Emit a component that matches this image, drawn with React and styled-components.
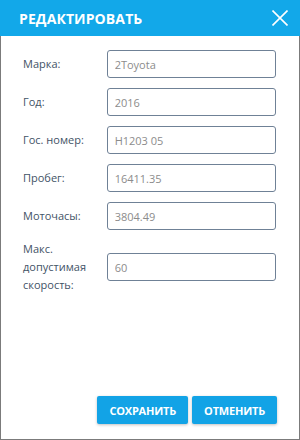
import React from "react";
import styled, { createGlobalStyle } from "styled-components";

const GlobalStyle = createGlobalStyle`
  html, body {
    margin: 0;
    padding: 0;
    background: #ffffff;
  }
  body {
    font-family: "Open Sans", "Liberation Sans", sans-serif;
  }
`;

const Dialog = styled.div`
  width: 300px;
  height: 440px;
  box-sizing: border-box;
  border: 1px solid #7b7b7b;
  border-top: none;
  display: flex;
  flex-direction: column;
  background: #fff;
`;

const Header = styled.div`
  height: 36px;
  margin: 0 -1px;
  background: #12a8e9;
  display: flex;
  align-items: center;
  justify-content: space-between;
  padding: 0 12px 0 19px;
  flex-shrink: 0;
`;

const Title = styled.h1`
  margin: 0;
  color: #fff;
  font-size: 14px;
  font-weight: 700;
  letter-spacing: 0.1px;
`;

const CloseButton = styled.button`
  border: none;
  background: none;
  padding: 0;
  width: 16px;
  height: 16px;
  display: flex;
  cursor: pointer;
`;

const Form = styled.div`
  flex: 1;
  display: flex;
  flex-direction: column;
  gap: 10px;
  padding: 14px 23px 0 22px;
`;

const Row = styled.div`
  display: flex;
  align-items: center;
  min-height: 28px;
`;

const Label = styled.label`
  width: 84px;
  font-size: 11px;
  line-height: 18px;
  color: #3f5366;
`;

const Input = styled.input`
  width: 170px;
  height: 28px;
  box-sizing: border-box;
  border: 1px solid #6f8196;
  border-radius: 3px;
  padding: 0 7px;
  font-family: inherit;
  font-size: 11px;
  color: #8c8c8c;
  outline: none;
`;

const Footer = styled.div`
  display: flex;
  justify-content: flex-end;
  gap: 4px;
  padding: 0 22px 15px 0;
`;

const Button = styled.button`
  height: 28px;
  padding: 0 12px;
  border: none;
  border-radius: 2px;
  background: #12a3e6;
  color: #fff;
  font-family: inherit;
  font-size: 11px;
  font-weight: 700;
  letter-spacing: -0.2px;
  box-shadow: 0 1px 3px rgba(0, 0, 0, 0.25);
  cursor: pointer;
`;

const fields = [
  { label: "Марка:", value: "2Toyota" },
  { label: "Год:", value: "2016" },
  { label: "Гос. номер:", value: "H1203 05" },
  { label: "Пробег:", value: "16411.35" },
  { label: "Моточасы:", value: "3804.49" },
  { label: "Макс. допустимая скорость:", value: "60" },
];

export default function App() {
  return (
    <>
      <GlobalStyle />
      <Dialog>
        <Header>
          <Title>РЕДАКТИРОВАТЬ</Title>
          <CloseButton aria-label="close">
            <svg width="16" height="16" viewBox="0 0 16 16">
              <path d="M0.5 0.5 L15.5 15.5 M15.5 0.5 L0.5 15.5" stroke="#fff" strokeWidth="1.6" />
            </svg>
          </CloseButton>
        </Header>
        <Form>
          {fields.map((f) => (
            <Row key={f.label}>
              <Label>{f.label}</Label>
              <Input defaultValue={f.value} />
            </Row>
          ))}
        </Form>
        <Footer>
          <Button>СОХРАНИТЬ</Button>
          <Button>ОТМЕНИТЬ</Button>
        </Footer>
      </Dialog>
    </>
  );
}
